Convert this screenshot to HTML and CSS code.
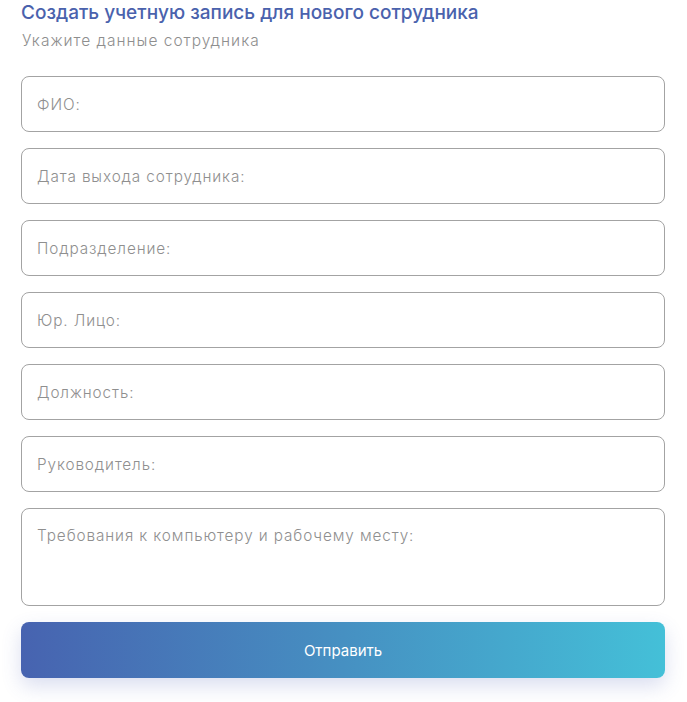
FILE: index.html
```html
<!DOCTYPE html>
<html lang="ru">
<head>
<meta charset="utf-8">
<link rel="stylesheet" href="styles.css">
</head>
<body>
<form class="form">
  <h1 class="title">Создать учетную запись для нового сотрудника</h1>
  <p class="subtitle">Укажите данные сотрудника</p>
  <div class="fields">
    <input class="field" type="text" placeholder="ФИО:">
    <input class="field" type="text" placeholder="Дата выхода сотрудника:">
    <input class="field" type="text" placeholder="Подразделение:">
    <input class="field" type="text" placeholder="Юр. Лицо:">
    <input class="field" type="text" placeholder="Должность:">
    <input class="field" type="text" placeholder="Руководитель:">
    <textarea class="field area" placeholder="Требования к компьютеру и рабочему месту:"></textarea>
    <button class="submit" type="button">Отправить</button>
  </div>
</form>
</body>
</html>
```
FILE: styles.css
```css
* { box-sizing: border-box; }
html, body { margin: 0; padding: 0; background: #fff; }
body { font-family: Inter, "Open Sans", sans-serif; }
.form { padding: 0 22px 24px 21px; }
.title {
  margin: 0;
  padding-top: 1px;
  font-size: 19px;
  line-height: 24px;
  font-weight: 500;
  color: #4a62ad;
}
.subtitle {
  margin: 6px 0 0 1px;
  font-size: 15.5px;
  line-height: 20px;
  font-weight: 300;
  letter-spacing: 1px;
  color: #8e8e8e;
}
.fields {
  margin-top: 25px;
  display: flex;
  flex-direction: column;
  gap: 16px;
}
.field {
  display: block;
  width: 100%;
  height: 56px;
  border: 1px solid #a3a3a3;
  border-radius: 8px;
  padding: 0 15px;
  font-family: inherit;
  font-size: 15.3px;
  font-weight: 300;
  letter-spacing: 0.9px;
  color: #333;
  background: #fff;
  outline: none;
}
.field::placeholder { color: #8f8f8f; opacity: 1; }
.area {
  height: 98px;
  padding: 17px 15px;
  resize: none;
  line-height: 20px;
}
.submit {
  height: 56px;
  width: 100%;
  border: none;
  border-radius: 8px;
  background: linear-gradient(90deg, #4763b0 0%, #4690c2 50%, #44c0d8 100%);
  color: #fff;
  font-family: inherit;
  font-size: 15px;
  font-weight: 400;
  box-shadow: 0 8px 20px rgba(70, 90, 180, 0.2);
}
```
